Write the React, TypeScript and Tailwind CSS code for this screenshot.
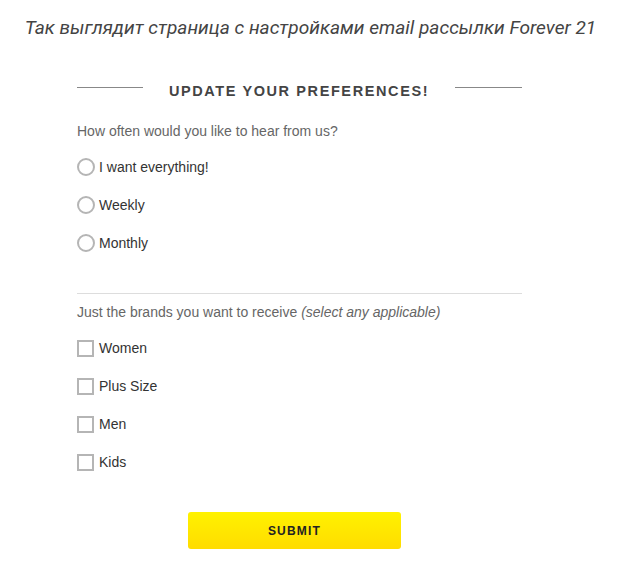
import { useState } from "react";

const frequencies = ["I want everything!", "Weekly", "Monthly"];
const brands = ["Women", "Plus Size", "Men", "Kids"];

export default function App() {
  const [freq, setFreq] = useState<string | null>(null);
  const [picked, setPicked] = useState<string[]>([]);

  const toggle = (b: string) =>
    setPicked((p) => (p.includes(b) ? p.filter((x) => x !== b) : [...p, b]));

  return (
    <div className="min-h-[566px] w-[634px] bg-white font-['Liberation_Sans',Arial,sans-serif]">
      <p className="pr-[13px] pt-[16px] text-center font-['Roboto',sans-serif] text-[19.1px] italic leading-[24px] text-[#444]">
        Так выглядит страница с настройками email рассылки Forever 21
      </p>

      <div className="ml-[77px] w-[445px]">
        <div className="mt-[42px] flex h-[20px] items-center">
          <div className="mb-[10px] h-px w-[66px] bg-[#888]" />
          <h2 className="flex-1 text-center text-[14.5px] font-bold tracking-[1.6px] text-[#444]">
            UPDATE YOUR PREFERENCES!
          </h2>
          <div className="mb-[10px] h-px w-[67px] bg-[#888]" />
        </div>

        <p className="mt-[19px] text-[14px] leading-[20px] text-[#666]">
          How often would you like to hear from us?
        </p>

        <div className="mt-[7px]">
          {frequencies.map((f) => (
            <label key={f} className="flex h-[38px] cursor-pointer items-center gap-[4px] text-[14px] text-[#333]">
              <span
                onClick={() => setFreq(f)}
                className="flex h-[18px] w-[18px] items-center justify-center rounded-full border-2 border-[#b5b5b5]"
              >
                {freq === f && <span className="h-[8px] w-[8px] rounded-full bg-[#333]" />}
              </span>
              {f}
            </label>
          ))}
        </div>

        <div className="mt-[31px] border-t border-[#ddd]" />

        <p className="mt-[8px] text-[14px] leading-[20px] text-[#666]">
          Just the brands you want to receive <i>(select any applicable)</i>
        </p>

        <div className="mt-[7px]">
          {brands.map((b) => (
            <label key={b} className="flex h-[38px] cursor-pointer items-center gap-[5px] text-[14px] text-[#333]">
              <span
                onClick={() => toggle(b)}
                className="flex h-[17px] w-[17px] items-center justify-center border-2 border-[#b5b5b5] text-[11px] leading-none"
              >
                {picked.includes(b) ? "✓" : ""}
              </span>
              {b}
            </label>
          ))}
        </div>

        <button className="ml-[111px] mt-[31px] flex h-[37px] w-[213px] items-center justify-center rounded-[3px] bg-gradient-to-b from-[#fff200] to-[#ffdc00] text-[12px] font-bold tracking-[1.2px] text-[#222]">
          SUBMIT
        </button>
      </div>
    </div>
  );
}
